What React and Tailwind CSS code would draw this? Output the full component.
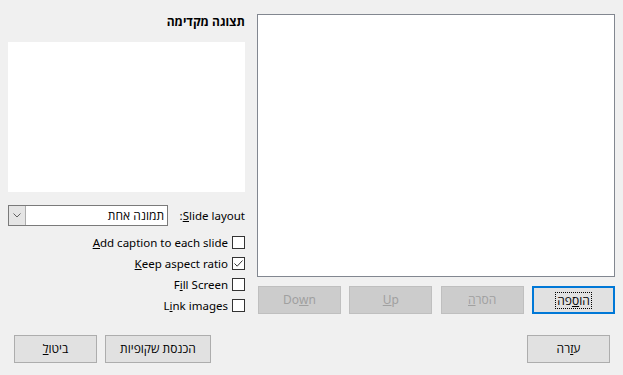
import React from "react";

const font = { fontFamily: "'Noto Sans','Liberation Sans',sans-serif" };
const heb = { fontFamily: "'Open Sans','Liberation Sans',sans-serif" };

function Btn({ children, w = "w-[83px]", disabled, isDefault }) {
  if (isDefault) {
    return (
      <div className={`${w} h-[28px] border-2 border-[#0078d7] bg-[#e1e1e1] flex items-center justify-center text-[12px] text-black`}>
        <span className="border border-dotted border-black px-[1px] leading-[15px]">{children}</span>
      </div>
    );
  }
  return (
    <div
      className={`${w} h-[28px] border flex items-center justify-center text-[12px] ${
        disabled ? "border-[#bfbfbf] bg-[#cccccc] text-[#a0a0a0]" : "border-[#adadad] bg-[#e1e1e1] text-black"
      }`}
    >
      {children}
    </div>
  );
}

function Check({ label, checked }) {
  return (
    <div className="h-[21px] flex items-center justify-end gap-[4px]">
      <span className="text-[11.5px] text-black leading-[15px]">{label}</span>
      <div className="w-[13px] h-[13px] border border-[#333333] bg-white flex items-center justify-center">
        {checked && (
          <svg width="11" height="11" viewBox="0 0 11 11">
            <path d="M1.5 5.5 L4.2 8.2 L9.5 2.5" fill="none" stroke="#333333" strokeWidth="1" />
          </svg>
        )}
      </div>
    </div>
  );
}

export default function App() {
  return (
    <div className="w-[623px] h-[375px] bg-[#f0f0f0] flex flex-col overflow-hidden" style={font}>
      <div className="flex pt-[14px] pl-[8px] gap-[12px]">
        {/* left column */}
        <div className="w-[237px] flex flex-col">
          <div className="h-[16px] flex items-center justify-end text-[12px] font-bold text-black leading-[16px]">
            <span dir="rtl" style={heb}>תצוגה מקדימה</span>
          </div>
          <div className="mt-[12px] h-[150px] bg-white" />
          <div className="mt-[13px] h-[21px] flex items-center justify-between">
            <div className="w-[160px] h-[21px] flex border border-[#7a7a7a] bg-white">
              <div className="w-[17px] h-full bg-[#e5e5e5] border-r border-[#adadad] flex items-center justify-center">
                <svg width="8" height="5" viewBox="0 0 8 5">
                  <path d="M0.5 0.5 L4 4 L7.5 0.5" fill="none" stroke="#606060" strokeWidth="1" />
                </svg>
              </div>
              <div className="flex-1 flex items-center justify-end pr-[3px] text-[12px] text-black">
                <span dir="rtl" style={heb}>תמונה אחת</span>
              </div>
            </div>
            <span className="text-[11.5px] text-black">
              :<u>S</u>lide layout
            </span>
          </div>
          <div className="mt-[6px] flex flex-col">
            <Check label={<><u>A</u>dd caption to each slide</>} />
            <Check label={<><u>K</u>eep aspect ratio</>} checked />
            <Check label={<>F<u>i</u>ll Screen</>} />
            <Check label={<>L<u>i</u>nk images</>} />
          </div>
        </div>
        {/* right column */}
        <div className="w-[358px] flex flex-col">
          <div className="h-[263px] bg-white border border-[#828790]" />
          <div className="mt-[9px] pl-[1px] flex justify-between">
            <Btn disabled>Do<u>w</u>n</Btn>
            <Btn disabled><u>U</u>p</Btn>
            <Btn disabled><span dir="rtl" style={heb}>הסר<u>ה</u></span></Btn>
            <Btn isDefault><span dir="rtl" style={heb}>הו<u>ס</u>פה</span></Btn>
          </div>
        </div>
      </div>
      <div className="mt-[19px] pl-[14px] pr-[13px] flex justify-between">
        <div className="flex gap-[8px]">
          <Btn><span dir="rtl" style={heb}>ביטו<u>ל</u></span></Btn>
          <Btn w="w-[106px]"><span dir="rtl" style={heb}>הכנסת שקופיות</span></Btn>
        </div>
        <Btn><span dir="rtl" style={heb}>ע<u>ז</u>רה</span></Btn>
      </div>
    </div>
  );
}
